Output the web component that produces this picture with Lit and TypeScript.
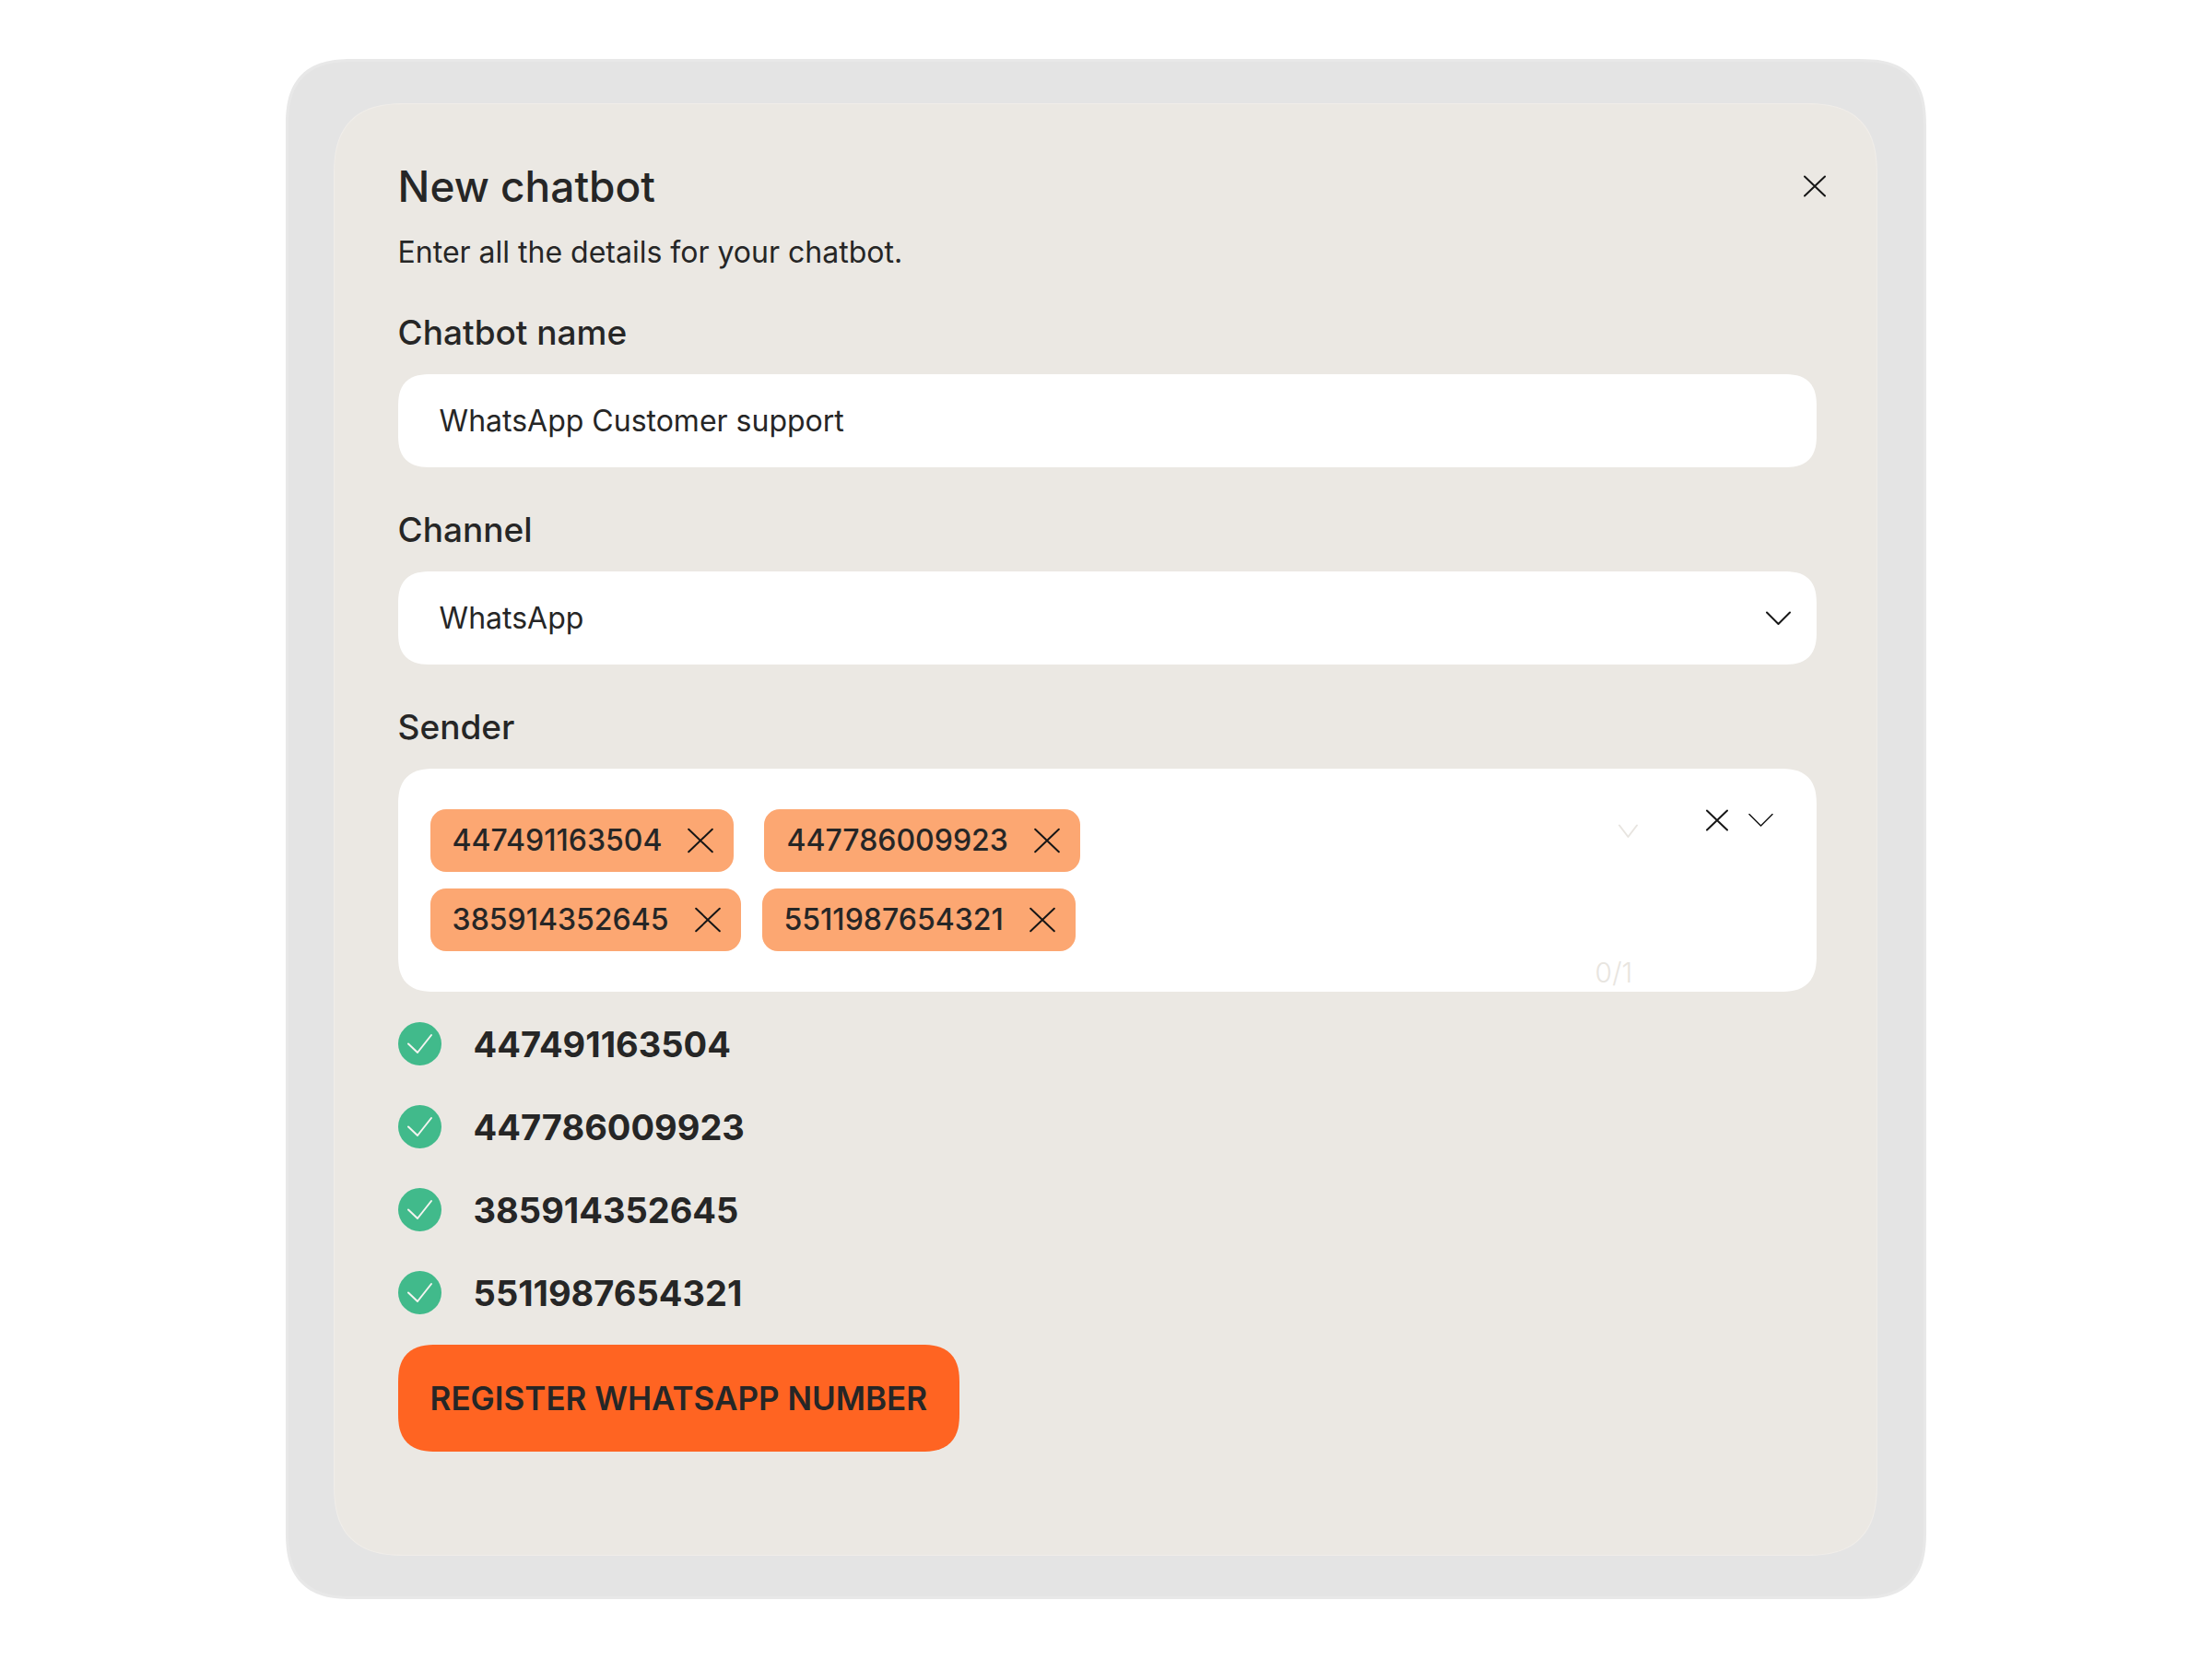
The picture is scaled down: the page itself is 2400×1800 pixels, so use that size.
import { LitElement, html, css, svg } from "lit";
import { customElement, state } from "lit/decorators.js";

const NUMBERS = ["447491163504", "447786009923", "385914352645", "5511987654321"];

const cross = (size: number) => html`<svg
  class="icon"
  width=${size}
  height=${size}
  viewBox="0 0 24 24"
  aria-hidden="true"
>
  ${svg`<path d="M1 1.5L23 22.5M23 1.5L1 22.5" />`}
</svg>`;

const chevron = (width: number) => html`<svg
  class="icon"
  width=${width}
  height="16"
  viewBox="0 0 ${width} 16"
  aria-hidden="true"
>
  ${svg`<path d=${`M1 1.5L${width / 2} 14L${width - 1} 1.5`} />`}
</svg>`;

@customElement("app-root")
export class AppRoot extends LitElement {
  @state() private senders: string[] = [...NUMBERS];

  static styles = css`
    :host {
      display: block;
      background: #ffffff;
      color: #262626;
      font-family: Inter, "Liberation Sans", sans-serif;
      font-size: 32px;
      line-height: 44px;
    }
    *,
    *::before,
    *::after {
      box-sizing: border-box;
    }
    button,
    input,
    select {
      font: inherit;
      color: inherit;
      border: 0;
      margin: 0;
      padding: 0;
      background: none;
    }
    button {
      cursor: pointer;
    }
    .page {
      padding: 64px 0;
    }
    .shell {
      width: 74.2%;
      margin: 0 auto;
      padding: 45px 50px 44px 49px;
      border: 3px solid #e8e8e8;
      border-radius: 60px;
      background: #e4e4e4;
    }
    .panel {
      padding: 61px 65px 112px 69px;
      border: 1px solid #f0ede9;
      border-radius: 62px;
      background: #ebe8e3;
    }
    .header {
      display: flex;
      align-items: center;
      justify-content: space-between;
      margin-right: -20px;
    }
    .title {
      margin: 0;
      font-size: 46px;
      line-height: 56px;
      font-weight: 500;
    }
    .close {
      display: flex;
      padding: 10px;
    }
    .icon {
      display: block;
      fill: none;
      stroke: #161616;
      stroke-width: 2;
      stroke-linecap: round;
      stroke-linejoin: round;
    }
    .subtitle {
      margin: 22px 0 42px;
    }
    .form {
      display: flex;
      flex-direction: column;
      gap: 45px;
    }
    .field {
      display: flex;
      flex-direction: column;
      gap: 22px;
      min-width: 0;
    }
    .label {
      font-size: 37px;
      line-height: 46px;
      font-weight: 500;
    }
    .box {
      display: block;
      width: 100%;
      height: 101px;
      padding: 0 45px;
      border-radius: 30px;
      background: #ffffff;
    }
    .select {
      display: grid;
      align-items: center;
    }
    .select > * {
      grid-area: 1 / 1;
    }
    .select select {
      appearance: none;
    }
    .select .icon {
      justify-self: end;
      margin-right: 28px;
      pointer-events: none;
    }
    .multi {
      display: flex;
      min-height: 242px;
      padding: 44px 47px 0 35px;
      border-radius: 32px;
      background: #ffffff;
    }
    .chips {
      display: flex;
      flex: 1;
      flex-direction: column;
      gap: 18px;
    }
    .chip-row {
      display: flex;
      gap: 23px;
    }
    .chip-row:first-child {
      gap: 33px;
    }
    .chip {
      display: flex;
      align-items: center;
      gap: 28px;
      height: 68px;
      padding: 0 22px 0 24px;
      border-radius: 17px;
      background: #fca772;
      font-weight: 500;
    }
    .chip button {
      display: flex;
    }
    .chip .icon {
      stroke-width: 1.7;
    }
    .ghost {
      display: flex;
      flex-direction: column;
      align-items: flex-end;
      justify-content: space-between;
      padding-top: 16px;
      color: #e8e5e0;
      font-size: 30px;
      line-height: 42px;
      font-weight: 300;
    }
    .ghost .icon {
      margin-right: -6px;
      stroke: #e8e5e0;
    }
    .actions {
      display: flex;
      align-items: center;
      align-self: flex-start;
      gap: 22px;
      margin-left: 80px;
    }
    .actions button {
      display: flex;
    }
    .actions button:last-child .icon {
      stroke-width: 1.5;
    }
    .list {
      display: flex;
      flex-direction: column;
      gap: 42px;
      margin: 33px 0 32px;
      padding: 0;
      list-style: none;
    }
    .item {
      display: flex;
      align-items: center;
      gap: 34px;
      font-size: 38px;
      line-height: 48px;
      font-weight: 700;
    }
    .check {
      display: block;
    }
    .submit {
      height: 116px;
      padding: 0 35px;
      border-radius: 34px;
      background: #ff6422;
      font-size: 35px;
      font-weight: 600;
    }
    @supports (corner-shape: superellipse(1.4)) {
      .shell,
      .panel,
      .box,
      .multi,
      .submit {
        corner-shape: superellipse(1.4);
      }
      .shell {
        border-radius: 74px;
      }
      .panel {
        border-radius: 80px;
      }
      .box {
        border-radius: 36px;
      }
      .multi {
        border-radius: 40px;
      }
      .submit {
        border-radius: 42px;
      }
    }
  `;

  private remove(value: string) {
    this.senders = this.senders.filter((s) => s !== value);
  }

  private renderChip(value: string) {
    return html`<div class="chip">
      <span>${value}</span>
      <button type="button" aria-label="Remove ${value}" @click=${() => this.remove(value)}>
        ${cross(28)}
      </button>
    </div>`;
  }

  render() {
    const rows: string[][] = [];
    for (let i = 0; i < this.senders.length; i += 2) rows.push(this.senders.slice(i, i + 2));

    return html`<main class="page">
      <div class="shell">
        <section class="panel" aria-labelledby="title">
          <header class="header">
            <h1 class="title" id="title">New chatbot</h1>
            <button class="close" type="button" aria-label="Close">${cross(24)}</button>
          </header>
          <p class="subtitle">Enter all the details for your chatbot.</p>
          <form class="form" id="form" @submit=${(e: Event) => e.preventDefault()}>
            <div class="field">
              <label class="label" for="name">Chatbot name</label>
              <input class="box" id="name" type="text" value="WhatsApp Customer support" />
            </div>
            <div class="field">
              <label class="label" for="channel">Channel</label>
              <div class="select">
                <select class="box" id="channel">
                  <option>WhatsApp</option>
                </select>
                ${chevron(27)}
              </div>
            </div>
            <div class="field">
              <span class="label" id="sender">Sender</span>
              <div class="multi" role="group" aria-labelledby="sender">
                <div class="chips">
                  ${rows.map(
                    (row) => html`<div class="chip-row">${row.map((v) => this.renderChip(v))}</div>`
                  )}
                </div>
                <div class="ghost">${chevron(21)}<span>0/1</span></div>
                <div class="actions">
                  <button type="button" aria-label="Clear senders" @click=${() => (this.senders = [])}>
                    ${cross(24)}
                  </button>
                  <button type="button" aria-label="Open sender list">${chevron(27)}</button>
                </div>
              </div>
            </div>
          </form>
          <ul class="list">
            ${NUMBERS.map(
              (n) => html`<li class="item">
                <svg class="check" width="48" height="48" viewBox="0 0 48 48" aria-hidden="true">
                  <circle cx="23.5" cy="23.5" r="23.5" fill="#41ba8b" />
                  <path
                    d="M11 23.5L21 33L36 14"
                    fill="none"
                    stroke="#f4f4f0"
                    stroke-width="2"
                    stroke-linecap="round"
                    stroke-linejoin="round"
                  />
                </svg>
                <span>${n}</span>
              </li>`
            )}
          </ul>
          <button class="submit" type="submit" form="form">REGISTER WHATSAPP NUMBER</button>
        </section>
      </div>
    </main>`;
  }
}
